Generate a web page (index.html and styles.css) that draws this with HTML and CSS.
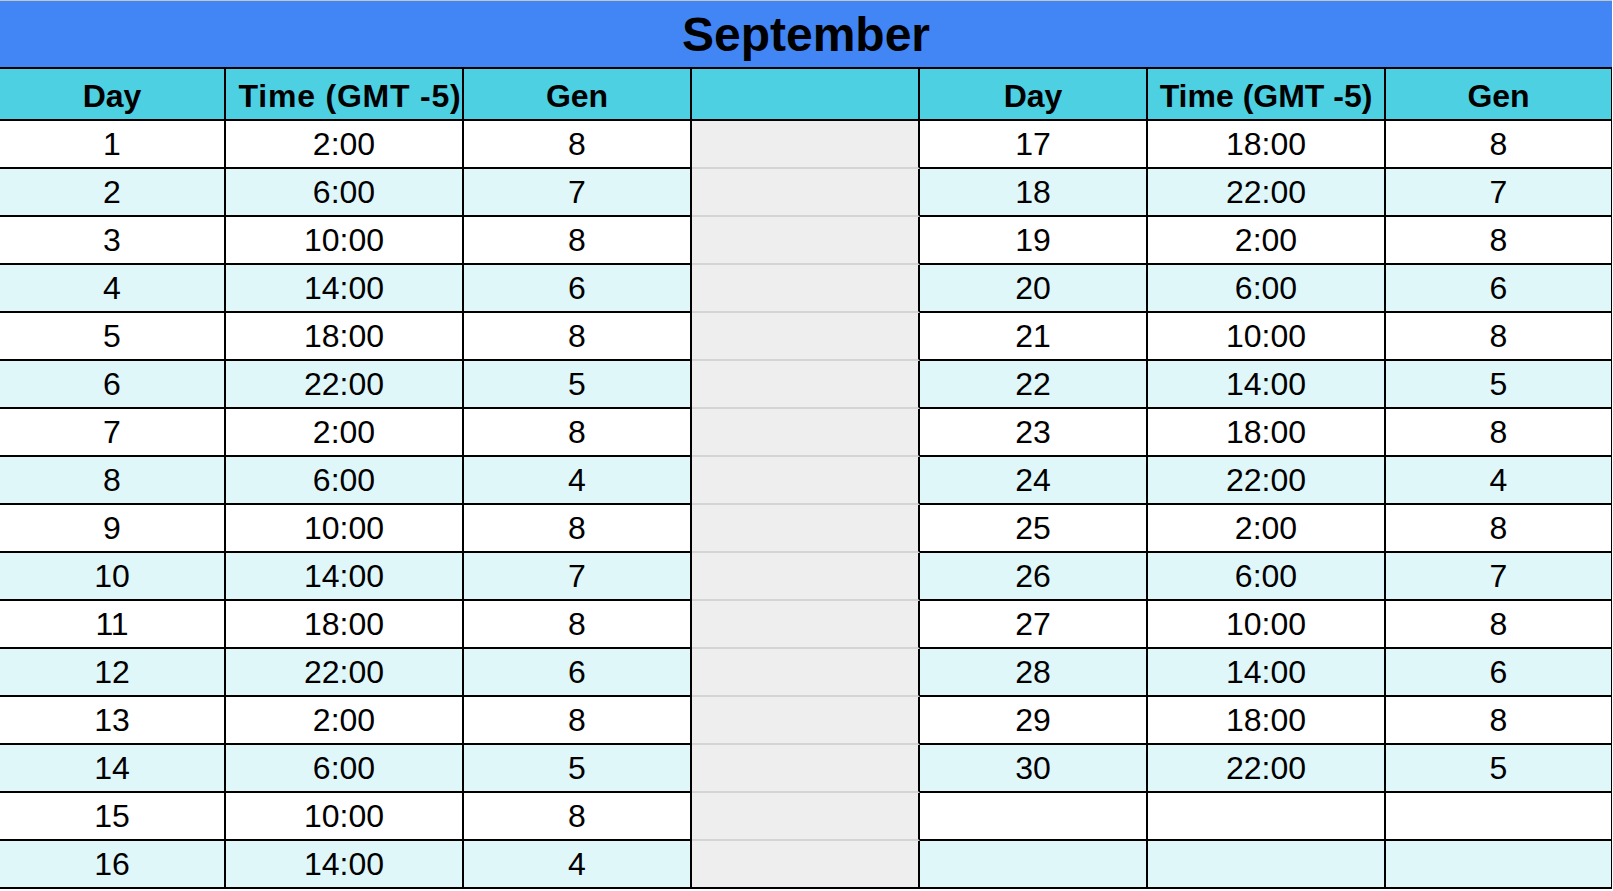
FILE: index.html
```html
<!DOCTYPE html>
<html>
<head>
<meta charset="utf-8">
<link rel="stylesheet" href="styles.css">
</head>
<body>
<div class="sheet">
  <div class="title">September</div>
  <div class="grid">
    <div class="cell hd">Day</div><div class="cell hd wide">Time (GMT -5)</div><div class="cell hd">Gen</div><div class="cell hd gaphd"></div><div class="cell hd">Day</div><div class="cell hd">Time (GMT -5)</div><div class="cell hd last">Gen</div>

    <div class="cell">1</div><div class="cell">2:00</div><div class="cell">8</div><div class="cell gap"></div><div class="cell">17</div><div class="cell">18:00</div><div class="cell last">8</div>
    <div class="cell alt">2</div><div class="cell alt">6:00</div><div class="cell alt">7</div><div class="cell gap"></div><div class="cell alt">18</div><div class="cell alt">22:00</div><div class="cell alt last">7</div>
    <div class="cell">3</div><div class="cell">10:00</div><div class="cell">8</div><div class="cell gap"></div><div class="cell">19</div><div class="cell">2:00</div><div class="cell last">8</div>
    <div class="cell alt">4</div><div class="cell alt">14:00</div><div class="cell alt">6</div><div class="cell gap"></div><div class="cell alt">20</div><div class="cell alt">6:00</div><div class="cell alt last">6</div>
    <div class="cell">5</div><div class="cell">18:00</div><div class="cell">8</div><div class="cell gap"></div><div class="cell">21</div><div class="cell">10:00</div><div class="cell last">8</div>
    <div class="cell alt">6</div><div class="cell alt">22:00</div><div class="cell alt">5</div><div class="cell gap"></div><div class="cell alt">22</div><div class="cell alt">14:00</div><div class="cell alt last">5</div>
    <div class="cell">7</div><div class="cell">2:00</div><div class="cell">8</div><div class="cell gap"></div><div class="cell">23</div><div class="cell">18:00</div><div class="cell last">8</div>
    <div class="cell alt">8</div><div class="cell alt">6:00</div><div class="cell alt">4</div><div class="cell gap"></div><div class="cell alt">24</div><div class="cell alt">22:00</div><div class="cell alt last">4</div>
    <div class="cell">9</div><div class="cell">10:00</div><div class="cell">8</div><div class="cell gap"></div><div class="cell">25</div><div class="cell">2:00</div><div class="cell last">8</div>
    <div class="cell alt">10</div><div class="cell alt">14:00</div><div class="cell alt">7</div><div class="cell gap"></div><div class="cell alt">26</div><div class="cell alt">6:00</div><div class="cell alt last">7</div>
    <div class="cell">11</div><div class="cell">18:00</div><div class="cell">8</div><div class="cell gap"></div><div class="cell">27</div><div class="cell">10:00</div><div class="cell last">8</div>
    <div class="cell alt">12</div><div class="cell alt">22:00</div><div class="cell alt">6</div><div class="cell gap"></div><div class="cell alt">28</div><div class="cell alt">14:00</div><div class="cell alt last">6</div>
    <div class="cell">13</div><div class="cell">2:00</div><div class="cell">8</div><div class="cell gap"></div><div class="cell">29</div><div class="cell">18:00</div><div class="cell last">8</div>
    <div class="cell alt">14</div><div class="cell alt">6:00</div><div class="cell alt">5</div><div class="cell gap"></div><div class="cell alt">30</div><div class="cell alt">22:00</div><div class="cell alt last">5</div>
    <div class="cell">15</div><div class="cell">10:00</div><div class="cell">8</div><div class="cell gap"></div><div class="cell"></div><div class="cell"></div><div class="cell last"></div>
    <div class="cell alt">16</div><div class="cell alt">14:00</div><div class="cell alt">4</div><div class="cell gap gaplast"></div><div class="cell alt"></div><div class="cell alt"></div><div class="cell alt last"></div>
  </div>
</div>
</body>
</html>
```

FILE: styles.css
```css
html, body {
  margin: 0;
  padding: 0;
  background: #ffffff;
}

body {
  font-family: "Liberation Sans", Arial, sans-serif;
  color: #000000;
}

.sheet {
  width: 1612px;
}

.title {
  box-sizing: border-box;
  height: 69px;
  border-top: 1px solid #c4c4c4;
  border-bottom: 2px solid #000000;
  background: #4285f4;
  font-size: 48px;
  font-weight: bold;
  display: flex;
  align-items: center;
  justify-content: center;
}

.grid {
  display: grid;
  grid-template-columns: 226px 238px 228px 228px 228px 238px 226px;
  grid-template-rows: 52px;
  grid-auto-rows: 48px;
}

.cell {
  box-sizing: border-box;
  border-right: 2px solid #000000;
  border-bottom: 2px solid #000000;
  background: #ffffff;
  font-size: 32px;
  display: flex;
  align-items: center;
  justify-content: center;
  white-space: nowrap;
}

.cell.last {
  border-right-width: 1px;
}

.cell.alt {
  background: #e0f7fa;
}

.cell.hd {
  background: #4dd0e1;
  font-weight: bold;
  font-size: 32px;
  padding-top: 5px;
}

.cell.hd.wide {
  letter-spacing: 0.8px;
  padding-left: 12px;
}

.cell.gap {
  background: #eeeeee;
  border-bottom-color: #d4d4d4;
}

.cell.gap.gaplast {
  border-bottom-color: #000000;
}
```
